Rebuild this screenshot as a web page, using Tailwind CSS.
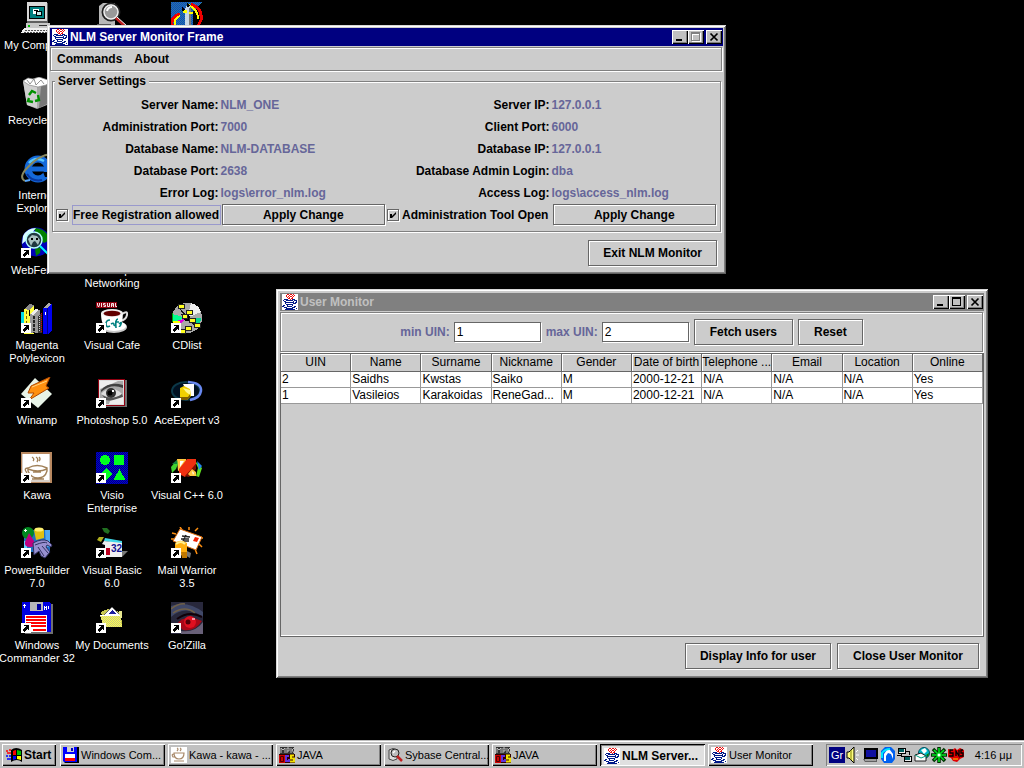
<!DOCTYPE html>
<html lang="en">
<head>
    <meta charset="UTF-8">
    <meta name="viewport" content="width=device-width, initial-scale=1.0">
    <title>NLM Server Monitor</title>
    <script src="https://cdn.jsdelivr.net/npm/@tailwindcss/browser@4"></script>
</head>
<body class="h-screen flex flex-col overflow-hidden bg-black text-black font-['Liberation_Sans',Arial,sans-serif]">

    <!-- shared icons -->
    <svg class="absolute size-0" aria-hidden="true">
        <defs>
            <pattern id="dither" width="2" height="2" patternUnits="userSpaceOnUse"><rect width="2" height="2" fill="#0000d0"/><path d="M0 0h1v1H0zM1 1h1v1H1z" fill="#000080"/></pattern>
            <pattern id="skyDither" width="2" height="2" patternUnits="userSpaceOnUse"><rect width="2" height="2" fill="#1040c0"/><path d="M0 0h1v1H0zM1 1h1v1H1z" fill="#2880a0"/></pattern>
            <pattern id="yellowDither" width="2" height="2" patternUnits="userSpaceOnUse"><rect width="2" height="2" fill="#ffff50"/><path d="M0 0h1v1H0zM1 1h1v1H1z" fill="#c8c880"/></pattern>
        </defs>
        <symbol id="shortcut" viewBox="0 0 10 10">
            <path d="M0 0h10v10H0z" fill="#fff"/>
            <path d="M3 2h5v5H7V6H6v1H5v1H4v1H3V8H2V6h1V5h1V4h1V3H3z" fill="#000"/>
        </symbol>
        <symbol id="java" viewBox="0 0 16 16">
            <g shape-rendering="crispEdges">
                <path d="M0 0h16v16H0z" fill="#fff"/>
                <path d="M5 .5h2M8 .5h2M11 .5h1M4 1.500h1M7 1.500h1M10 1.500h1M12 1.500h1M4 2.500h1M6 2.500h1M8 2.500h2M11 2.500h1M5 3.500h1M7 3.500h1M10 3.500h1M6 4.500h2M9 4.500h2M8 5.500h1" stroke="#f01010"/>
                <path d="M2 5.500h4M10 5.500h3M1 6.500h1M4 6.500h7M12 6.500h3M2 7.500h2M11 7.500h1M14 7.500h1M3 8.500h9M13 8.500h2M3 9.500h1M11 9.500h3M4 10.500h7M1 11.500h2M5 11.500h1M10 11.500h1M0 12.500h2M5 12.500h5M12 12.500h2M2 13.500h3M10 13.500h3M4 14.500h7M14 14.500h1M3 15.500h10" stroke="#001888"/>
            </g>
        </symbol>
        <symbol id="mks" viewBox="0 0 16 16">
            <path d="M1 0h14v7H1z" fill="#333"/><path d="M2 6V1l2 2 2-2v5M8 6V1h2v3H8M12 6V1m3 0l-2 2 2 3" fill="none" stroke="#c0c0c0" stroke-width="1"/>
            <path d="M0 7h16v9H0z" fill="#300000"/><path d="M0 8h6v8H0z" fill="#d00000"/><path d="M1.500 9.500h3v5h-3z" fill="none" stroke="#500000"/>
            <path d="M10 9H7v5h3v-2" fill="none" stroke="#6030e0" stroke-width="2"/>
            <path d="M15 8.500h-3v3h3v3h-4" fill="none" stroke="#f0e000" stroke-width="2"/>
        </symbol>
        <symbol id="floppy" viewBox="0 0 16 16">
            <path d="M1 0h15v16H2l-1-1z" fill="#000"/><path d="M0 0h14v15H1l-1-1z" fill="#0000ff"/>
            <path d="M4 0h7v5H4z" fill="#d0d0d0"/><path d="M8 1h2v3H8z" fill="#0000c0"/>
            <path d="M2 7h10v7H2z" fill="#fff"/><path d="M2 11h10v3H2z" fill="#f00"/>
        </symbol>
    </svg>

    <main class="relative flex-1 min-h-0">
        <div class="grid w-fit grid-cols-[75px_75px_75px] auto-rows-[75px] pt-0.5 text-white text-[11px] leading-[13px] text-center whitespace-nowrap">
            <a href="#" class="flex flex-col items-center gap-[5px] pr-px">
                <svg class="size-8 shrink-0" viewBox="0 0 32 32" shape-rendering="crispEdges">
                    <path d="M6 1h21v20H6z" fill="#606060"/><path d="M6 0h20v19H6z" fill="#d8d8d8"/><path d="M8 4h16v13H8z" fill="#000"/><path d="M9 5h14v11H9z" fill="#008080"/>
                    <path d="M12 7h6v5h-6z" fill="#fff"/><path d="M13 8h4v1h-4z" fill="#000"/><path d="M15 9h6v5h-6z" fill="#000"/><path d="M16 10h4v3h-4z" fill="#c0e8e8"/>
                    <path d="M5 21h24v6H5z" fill="#c8c8c8"/><path d="M7 23h2v2H7z" fill="#00c000"/><path d="M18 23h9v1h-9z" fill="#303030"/>
                    <path d="M3 26h27l-2 5H0z" fill="#f0f0f0"/><path d="M4 28h24M3 30h24" stroke="#505050" stroke-dasharray="2 1"/>
                </svg>
                <span>My Computer</span>
            </a>
            <a href="#" class="flex flex-col items-center gap-[5px] pr-px" aria-label="Find">
                <svg class="size-8 shrink-0" viewBox="0 0 32 32">
                    <path d="M3 4l4-3h12v28l-16-2z" fill="#b8b8b8"/><path d="M1 22h14v2H1z" fill="#555"/><path d="M0 23h12v5H0z" fill="#d8d8d8"/>
                    <circle cx="15" cy="10" r="8.500" fill="#888" stroke="#222" stroke-width="2"/><circle cx="15" cy="10" r="7" fill="#999" stroke="#eee" stroke-width="1.500"/>
                    <path d="M11 9q1-4 5-4" stroke="#fff" stroke-width="2" fill="none"/><path d="M20 16l10 9" stroke="#c02020" stroke-width="3"/><path d="M21 15l10 9" stroke="#fff" stroke-width="1"/>
                </svg>
            </a>
            <a href="#" class="flex flex-col items-center gap-[5px] pr-px" aria-label="Launcher">
                <svg class="size-8 shrink-0" viewBox="0 0 32 32" shape-rendering="crispEdges">
                    <path d="M0 0h32L22 9v18H0z" fill="url(#skyDither)"/><path d="M2 27Q-2 15 9 12M20 2q12 5 10 16l-4 8" stroke="#f00000" stroke-width="3" fill="none"/><path d="M4 26Q2 16 9 14M18 3q9 5 9 14" stroke="#ff0" stroke-width="2" fill="none"/>
                    <path d="M14 7l3-6 3 6v20h-6z" fill="#c8d8e8"/><path d="M18 6h2v21h-2z" fill="#777"/><path d="M12 8h4v3h-4zM18 10h4v2h-4z" fill="#ff0"/><path d="M11 5l3 3-3 1zM16 1l3 3-3 1z" fill="#000"/>
                </svg>
            </a>

            <a href="#" class="col-start-1 flex flex-col items-center gap-[5px] pr-px">
                <svg class="size-8 shrink-0" viewBox="0 0 32 32">
                    <path d="M2 4l14-3 14 3-4 24-10 4-10-4z" fill="#a8a8a8"/><path d="M2 4l4 24 10 3V10z" fill="#d0d0d0"/><path d="M20 9l-2 22 8-4L30 5z" fill="#777"/>
                    <path d="M2 4l5-3 5 1 6-2 6 2 6 2-5 4-8 2-9-2z" fill="#fff" stroke="#888" stroke-width=".7"/><path d="M6 3l3 4 4-5 2 6 5-5 3 4" fill="none" stroke="#777" stroke-width=".8"/>
                    <path d="M8 18l3-4 4 2M17 18l1 5-4 1M12 25l-5-1 1-3" stroke="#009000" stroke-width="2.400" fill="none"/>
                </svg>
                <span>Recycle Bin</span>
            </a>
            <a href="#" class="col-start-1 flex flex-col items-center gap-[5px] pr-px">
                <svg class="size-8 shrink-0" viewBox="0 0 32 32">
                    <circle cx="17" cy="17" r="10" fill="none" stroke="#1468d8" stroke-width="7"/><path d="M9 17h20" stroke="#1468d8" stroke-width="5"/>
                    <path d="M22 20h10v5h-8z" fill="#000"/><path d="M8 11q6-7 15-2" stroke="#58c8ff" stroke-width="2.500" fill="none"/><path d="M6 22q5 8 15 6" stroke="#0838a0" stroke-width="2" fill="none"/>
                    <path d="M4 29q-7-4 3-14Q18 3 30 2" stroke="#888860" stroke-width="2" fill="none"/><path d="M4 29l5-1" stroke="#58a8ff" stroke-width="2"/>
                </svg>
                <span>Internet<br>Explorer</span>
            </a>
            <a href="#" class="col-start-1 flex flex-col items-center gap-[5px] pr-px">
                <svg class="size-8 shrink-0" viewBox="0 0 32 32">
                    <circle cx="15" cy="15" r="14.500" fill="#0000b8"/><path d="M13 1q12 0 16 12l-6 3-7-6zM14 22l6-2-1 6-4 3z" fill="#008000"/><path d="M2 9Q6 1 15 1l-4 5-4 6-6 5z" fill="#d8ffff"/>
                    <circle cx="13" cy="13" r="8" fill="#203840" stroke="#b8ffff" stroke-width="1.500"/><path d="M7 12l4-4 5 1 3 4-2 5-3-4-2 1-2 4z" fill="#a8c0c0"/><path d="M10 12h2M15 12h2" stroke="#000" stroke-width="2"/><path d="M19 19l9 9" stroke="#00ffff" stroke-width="2"/>
                    <use href="#shortcut" y="21" width="10" height="10"/>
                </svg>
                <span>WebFerret</span>
            </a>
            <a href="#" class="flex flex-col items-center gap-[5px] pr-px">
                <svg class="size-8 shrink-0" viewBox="0 0 32 32"><path d="M3 12h26v14H3z" fill="#c0c0c0"/></svg>
                <span>Dial-Up<br>Networking</span>
            </a>

            <a href="#" class="col-start-1 flex flex-col items-center gap-[5px] pr-px">
                <svg class="size-8 shrink-0" viewBox="0 0 32 32" shape-rendering="crispEdges">
                    <path d="M0 10h3v13H0z" fill="#00d8e8"/><path d="M3 7l6-5 4 1v29H3z" fill="#ffff40"/><path d="M3 7l6-5 4 1-5 5z" fill="#888"/><path d="M5 9v20" stroke="#806000" stroke-dasharray="3 2"/><path d="M8.500 8v6" stroke="#000"/>
                    <path d="M9 12l6-5 4 1v23H9z" fill="#999"/><path d="M9 12l6-5 3 1-6 5z" fill="#eee"/><path d="M13 14v17" stroke="#222" stroke-width="2" stroke-dasharray="3 1"/>
                    <path d="M17 14l4-3v20h-4z" fill="#333"/><path d="M18.500 14v16" stroke="#ccc" stroke-dasharray="1 1"/><path d="M20.500 11v19" stroke="#e00000" stroke-dasharray="1 1"/>
                    <path d="M22 6l5-5 4 1v27l-4 3h-5z" fill="#0000f0"/><path d="M22 6l5-5 4 1-5 4z" fill="#aaa"/><path d="M24 10h1v3h-1z" fill="#fff"/><path d="M26.500 6v26" stroke="#000080"/>
                    <use href="#shortcut" y="21" width="10" height="10"/>
                </svg>
                <span>Magenta<br>Polylexicon</span>
            </a>
            <a href="#" class="flex flex-col items-center gap-[5px] pr-px">
                <svg class="size-8 shrink-0" viewBox="0 0 32 32">
                    <path d="M0 0h21v6H0z" fill="#900010"/><path d="M1.500 1v2l1 2 1-2V1M5.500 1v4M9.500 1.500h-2V3h2v1.500h-2M11.500 1v3.500h2V1M15.500 5V1.500h2V5M15.500 3h2M19.500 1v3.500h1.500" stroke="#fff" stroke-width=".9" fill="none"/>
                    <ellipse cx="18" cy="25" rx="13" ry="6" fill="#c8c8c8"/><ellipse cx="18" cy="24" rx="12" ry="5" fill="#fff"/><path d="M26 12q6-4 5 1t-7 6" fill="none" stroke="#ddd" stroke-width="2"/>
                    <path d="M5 11q0 15 9 17h5q8-3 8-17z" fill="#fff"/><ellipse cx="16" cy="11" rx="11" ry="4" fill="#eee"/><ellipse cx="16" cy="11.500" rx="8.500" ry="2.800" fill="#600000"/>
                    <path d="M14 18q-4 0-4 4t4 2M15 22q3-2 3 1l1 1M22 17q-3 0-2 9M19 20h4M23 22q3-3 2 0t-2 2" stroke="#008080" stroke-width="1.600" fill="none"/>
                    <use href="#shortcut" y="21" width="10" height="10"/>
                </svg>
                <span>Visual Cafe</span>
            </a>
            <a href="#" class="flex flex-col items-center gap-[5px] pr-px">
                <svg class="size-8 shrink-0" viewBox="0 0 32 32" shape-rendering="crispEdges">
                    <circle cx="16" cy="16" r="15" fill="#aaa"/><path d="M16 16L20 1q8 2 10 9z" fill="#eee"/><path d="M16 16L1 12v8z" fill="#00ff90"/><path d="M16 16L2 20l3 6z" fill="#e000e0"/><path d="M16 16l14 0-1 7z" fill="#00d890"/><path d="M2 19h7v2H2z" fill="#ff0"/><path d="M20 20l10 2-4 5z" fill="#d000a0"/>
                    <path d="M1 11v9" stroke="#00a000"/><path d="M8 6l18 20M10 12h7" stroke="#111"/><circle cx="16" cy="16" r="3" fill="#000"/>
                    <g fill="#ffff20" stroke="#222" stroke-width="1"><path d="M7 2h6v4H7zM15 8h6v4h-6zM11 12h5v4h-5zM18 16h6v4h-6zM23 21h6v4h-6zM14 24h6v4h-6zM9 27h5v4H9z"/></g>
                    <use href="#shortcut" y="21" width="10" height="10"/>
                </svg>
                <span>CDlist</span>
            </a>

            <a href="#" class="flex flex-col items-center gap-[5px] pr-px">
                <svg class="size-8 shrink-0" viewBox="0 0 32 32">
                    <path d="M14 1l17 16-14 14L0 17z" fill="#e8f4e8"/><path d="M29 0l-4 9 3 2L8 23l5-7H7l3-7z" fill="#ff9010" stroke="#b04800" stroke-width="1"/><path d="M26 4L11 10" stroke="#ffd080"/>
                    <use href="#shortcut" y="21" width="10" height="10"/>
                </svg>
                <span>Winamp</span>
            </a>
            <a href="#" class="flex flex-col items-center gap-[5px] pr-px">
                <svg class="size-8 shrink-0" viewBox="0 0 32 32">
                    <path d="M4 3h27v27H4z" fill="#707070"/><path d="M2 2h27v27H2z" fill="#900010"/><path d="M3 3h25v25H3z" fill="#ddd"/><path d="M4 4h23v23H4z" fill="#a8a8a8"/>
                    <path d="M4 4h18L4 12z" fill="#eee"/><path d="M5 13q8-9 22-5v3q-12-5-22 4z" fill="#404040"/><path d="M5 17q10-11 21 0-9 7-21 0z" fill="#ddd"/><circle cx="15" cy="16" r="5" fill="#303030"/><circle cx="14" cy="16" r="2.500" fill="#000"/><path d="M16 13h2v2h-2z" fill="#fff"/><path d="M6 18q10 6 20-1l1 3q-8 5-17 3z" fill="#555"/><path d="M14 24l13-4v7H13z" fill="#eee"/>
                    <use href="#shortcut" y="21" width="10" height="10"/>
                </svg>
                <span>Photoshop 5.0</span>
            </a>
            <a href="#" class="flex flex-col items-center gap-[5px] pr-px">
                <svg class="size-8 shrink-0" viewBox="0 0 32 32">
                    <ellipse cx="15" cy="14" rx="14" ry="9" fill="#001020" stroke="#0c3848" stroke-width="2"/><path d="M17 5q14 1 13 9-1 7-11 9" fill="none" stroke="#6888f0" stroke-width="2.500"/><path d="M12 7h11v12h-5z" fill="#fff"/><path d="M9 11l4-2 6 3 1 7-4 4H9z" fill="#f0d000"/><path d="M12 11l7 2v5l-4-3z" fill="#fff890"/><path d="M9 20h8l2-3v3l-3 3H9z" fill="#806000"/>
                    <use href="#shortcut" y="21" width="10" height="10"/>
                </svg>
                <span>AceExpert v3</span>
            </a>

            <a href="#" class="flex flex-col items-center gap-[5px] pr-px">
                <svg class="size-8 shrink-0" viewBox="0 0 32 32">
                    <path d="M0 0h31v31H0z" fill="#b88860"/><path d="M1 2h28v28H1z" fill="#d8d0c8"/><path d="M2 2h26v26H2z" fill="#fff"/>
                    <path d="M11 5q3 2 1 4M15 5q3 2 1 5M18 5q2 2 0 4M7 16q9-5 19 0v3q-2 7-9 7t-10-7zM7 17q10 4 19 0M7 16q-5 0-1 5M12 20h8M11 27h12" fill="none" stroke="#a08058" stroke-width="1.400"/>
                    <use href="#shortcut" y="21" width="10" height="10"/>
                </svg>
                <span>Kawa</span>
            </a>
            <a href="#" class="flex flex-col items-center gap-[5px] pr-px">
                <svg class="size-8 shrink-0" viewBox="0 0 32 32" shape-rendering="crispEdges">
                    <path d="M0 0h32v32H0z" fill="url(#dither)"/><g fill="#00ff20"><circle cx="9" cy="8" r="5"/><path d="M18 3h10v10H18zM10 16l6 6-6 6-6-6zM23.500 17l6 11h-12z"/></g>
                    <use href="#shortcut" y="21" width="10" height="10"/>
                </svg>
                <span>Visio<br>Enterprise</span>
            </a>
            <a href="#" class="flex flex-col items-center gap-[5px] pr-px">
                <svg class="size-8 shrink-0" viewBox="0 0 32 32">
                    <path d="M6 7h9v9l-8 3z" fill="#ffc840"/><path d="M6 8l-6 7 1 6 4-4 2-5z" fill="#40d030"/><path d="M9 9h4l-4 6z" fill="#fff"/>
                    <path d="M24 9l7 7-3 9-3-1 2-8z" fill="#60e020"/><path d="M26 9l5 5-3 4z" fill="#2088f0"/><path d="M1 12l5-4v4z" fill="#108040"/>
                    <path d="M16 7h9v5L14 25l-6-3v-5z" fill="#f03010"/><path d="M14 24l11-12v5l-7 8z" fill="#801000"/><path d="M17 22l4-5 4 3v4h-6z" fill="#ffc840"/><path d="M21 19l2 2-1 2z" fill="#fff"/>
                    <use href="#shortcut" y="21" width="10" height="10"/>
                </svg>
                <span>Visual C++ 6.0</span>
            </a>

            <a href="#" class="flex flex-col items-center gap-[5px] pr-px">
                <svg class="size-8 shrink-0" viewBox="0 0 32 32">
                    <path d="M3 3h26v22H3z" fill="#2070c0"/><path d="M24 3h5v17h-4z" fill="#50a8f0"/><path d="M3 14h3v8H3z" fill="#60d0ff"/>
                    <circle cx="7" cy="6" r="6" fill="#008820"/><path d="M4 2h1v1h1v1H5v1H4V4H3V3h1z" fill="#fff"/><path d="M13 3q5-4 10 0v8l-8 2z" fill="#e0c010"/><ellipse cx="18" cy="2.500" rx="4.500" ry="2" fill="#fff070"/>
                    <path d="M8 6l5 8q2 6-4 6t-5-5z" fill="#c00080"/><path d="M12 16q9-5 15-2l4 4-1 2-4-2-1 2 4 5-5 6-4-2-2-5-5 4z" fill="#9890d0" stroke="#303060"/><path d="M14 18q10-4 12-2M17 20l6 9M21 19l6 7" fill="none" stroke="#303060"/>
                    <use href="#shortcut" y="21" width="10" height="10"/>
                </svg>
                <span>PowerBuilder<br>7.0</span>
            </a>
            <a href="#" class="flex flex-col items-center gap-[5px] pr-px">
                <svg class="size-8 shrink-0" viewBox="0 0 32 32">
                    <path d="M6 1h5l3 3-2 3-4-2z" fill="#207020"/><path d="M1 13l2-3 5 0-3 5z" fill="#b0b020"/><path d="M9 11l17 3v3L8 14z" fill="#40d8e8"/>
                    <path d="M6 17l2-3 18 2v14H9V18z" fill="#f0f0f0"/><path d="M26 24l6 0-6 6z" fill="#777"/><path d="M10 21h4v7h-4z" fill="#c00020"/>
                    <text x="15" y="25" font-size="10" font-weight="bold" fill="#101090" font-family="Liberation Sans">32</text>
                    <use href="#shortcut" y="21" width="10" height="10"/>
                </svg>
                <span>Visual Basic<br>6.0</span>
            </a>
            <a href="#" class="flex flex-col items-center gap-[5px] pr-px">
                <svg class="size-8 shrink-0" viewBox="0 0 32 32">
                    <path d="M9 0l2 3M18 0v3M27 1l-3 3M1 6l4 1M0 12h3M28 17l3 3M24 22l2 5M31 11h1" stroke="#ff9010" stroke-width="1.500"/>
                    <path d="M9 2l22 8-6 13L2 14z" fill="#fff" stroke="#e07010"/><path d="M24 10l4 1-2 4-4-1z" fill="#f02000"/><path d="M11 9l8 1M10 12l8 0M13 14h5M15 8l-3 6" stroke="#222" stroke-width="1.400"/>
                    <path d="M12 27l7 4 1-5-4-2z" fill="#777"/><path d="M4 17q4-6 12-1v9l-4 4-8-4z" fill="#ffb010"/><path d="M5 17q5-4 9 0" stroke="#fff090" stroke-width="2" fill="none"/><path d="M10 25h6v6h-5z" fill="#c07800"/>
                    <use href="#shortcut" y="21" width="10" height="10"/>
                </svg>
                <span>Mail Warrior<br>3.5</span>
            </a>

            <a href="#" class="flex flex-col items-center gap-[5px] pr-px">
                <svg class="size-8 shrink-0" viewBox="0 0 32 32" shape-rendering="crispEdges">
                    <path d="M3 2h29v30H4z" fill="#707070"/><path d="M1 0h27l2 2v28H1z" fill="#0000e0"/><path d="M9 0h13v9H9z" fill="#b8b8b8"/><path d="M16 2h4v6h-4z" fill="#0000a0"/>
                    <path d="M2 3.500h3M3.500 2v4M23.500 4v4M25.500 4v4M23 5.500h2M27.500 4v3" stroke="#fff"/><path d="M4 13h22v17H4z" fill="#fff"/><path d="M5 15h20M5 18h20M5 21h20M5 24h20" stroke="#f00" stroke-width="2"/><path d="M12 27h13v2H12z" fill="#f00"/>
                    <use href="#shortcut" y="21" width="10" height="10"/>
                </svg>
                <span>Windows<br>Commander 32</span>
            </a>
            <a href="#" class="flex flex-col items-center gap-[5px] pr-px">
                <svg class="size-8 shrink-0" viewBox="0 0 32 32" shape-rendering="crispEdges">
                    <path d="M5 10l4-2 6-2 10 5 1 13H8z" fill="#c8c850"/><path d="M8 13l8-8 8 8-1 3H9z" fill="#fff" stroke="#666"/><path d="M12 12l4-4 4 4z" fill="#2020a0"/><path d="M23 9h3v7h-3z" fill="#e8e890"/>
                    <path d="M4 13h20l2 12H8z" fill="url(#yellowDither)"/><path d="M4 13.500h20" stroke="#fff"/>
                    <use href="#shortcut" y="21" width="10" height="10"/>
                </svg>
                <span>My Documents</span>
            </a>
            <a href="#" class="flex flex-col items-center gap-[5px] pr-px">
                <svg class="size-8 shrink-0" viewBox="0 0 32 32">
                    <path d="M0 0h32v32H0z" fill="#28283c"/><path d="M0 4q16-6 32 6v5Q14 2 0 15z" fill="#404868"/><path d="M2 11q12-8 22 0M0 7q8-6 14-5" stroke="#706048" stroke-width="1.500" fill="none"/><path d="M6 22q8-11 25-3-7 11-19 9z" fill="#a80818"/><circle cx="19" cy="20" r="6" fill="#e01020"/><circle cx="17" cy="20" r="2.500" fill="#500008"/><path d="M21 16h3v2h-3z" fill="#ff90a0"/><path d="M10 29q14 2 22-9v12H10z" fill="#686078"/><path d="M6 17q12-9 25-2" stroke="#100008" stroke-width="2" fill="none"/>
                    <use href="#shortcut" y="21" width="10" height="10"/>
                </svg>
                <span>Go!Zilla</span>
            </a>
        </div>

        <!-- server monitor window -->
        <section class="absolute left-[47px] top-[25px] w-[679px] bg-[#cccccc] p-[3px] pb-2 shadow-[inset_1px_1px_#d8d8d8,inset_-1px_-1px_#606060,inset_2px_2px_#fff,inset_-2px_-2px_#808080] text-xs font-bold">
            <header class="flex h-[18px] items-center bg-[#000080] pl-0.5 pr-px text-white">
                <svg class="size-4 mr-0.5" viewBox="0 0 16 16"><use href="#java"/></svg>
                <h1 class="flex-1 leading-4">NLM Server Monitor Frame</h1>
                <button type="button" aria-label="Minimize" class="h-3.5 w-4 bg-[#c0c0c0] shadow-[inset_1px_1px_#fff,inset_-1px_-1px_#000,inset_-2px_-2px_#808080]"><svg class="h-3.5 w-4" viewBox="0 0 16 14"><path d="M4 9h6v2H4z"/></svg></button>
                <button type="button" disabled aria-label="Maximize" class="h-3.5 w-4 bg-[#c0c0c0] shadow-[inset_1px_1px_#fff,inset_-1px_-1px_#000,inset_-2px_-2px_#808080]"><svg class="h-3.5 w-4" viewBox="0 0 16 14" shape-rendering="crispEdges"><path d="M4.500 3.500h8v8h-8zM4 4.500h8" fill="none" stroke="#fff"/><path d="M3.500 2.500h8v8h-8zM3 3.500h8" fill="none" stroke="#808080"/></svg></button>
                <button type="button" aria-label="Close" class="ml-0.5 h-3.5 w-4 bg-[#c0c0c0] shadow-[inset_1px_1px_#fff,inset_-1px_-1px_#000,inset_-2px_-2px_#808080]"><svg class="h-3.5 w-4" viewBox="0 0 16 14"><path d="M4.500 3.500l7 7M11.500 3.500l-7 7" stroke="#000" stroke-width="1.700"/></svg></button>
            </header>
            <nav class="mt-px mr-px flex h-6 items-center gap-3 border border-[#808080] px-1.5 shadow-[1px_1px_#fff,inset_1px_1px_#fff]">
                <button type="button">Commands</button>
                <button type="button">About</button>
            </nav>
            <fieldset class="mx-0.5 mt-0.5 border border-[#808080] px-0.5 py-[5px] shadow-[1px_1px_#fff,inset_1px_1px_#fff]">
                <legend class="bg-[#cccccc] px-[3px] leading-4">Server Settings</legend>
                <div class="grid grid-cols-4 auto-rows-[22px] pr-px leading-[22px]">
                    <span class="pr-0.5 text-right">Server Name:</span><span class="text-[#666699]">NLM_ONE</span>
                    <span class="pr-0.5 text-right">Server IP:</span><span class="text-[#666699]">127.0.0.1</span>
                    <span class="pr-0.5 text-right">Administration Port:</span><span class="text-[#666699]">7000</span>
                    <span class="pr-0.5 text-right">Client Port:</span><span class="text-[#666699]">6000</span>
                    <span class="pr-0.5 text-right">Database Name:</span><span class="text-[#666699]">NLM-DATABASE</span>
                    <span class="pr-0.5 text-right">Database IP:</span><span class="text-[#666699]">127.0.0.1</span>
                    <span class="pr-0.5 text-right">Database Port:</span><span class="text-[#666699]">2638</span>
                    <span class="pr-0.5 text-right">Database Admin Login:</span><span class="text-[#666699]">dba</span>
                    <span class="pr-0.5 text-right">Error Log:</span><span class="text-[#666699]">logs\error_nlm.log</span>
                    <span class="pr-0.5 text-right">Access Log:</span><span class="text-[#666699]">logs\access_nlm.log</span>
                    <label class="flex items-center gap-1 pl-px whitespace-nowrap">
                        <span class="relative size-3 shrink-0"><input type="checkbox" checked class="block size-3 appearance-none border border-[#666666] shadow-[1px_1px_#fff,inset_1px_1px_#fff]"><svg class="pointer-events-none absolute inset-0 size-3" viewBox="0 0 12 12"><path d="M3 5h2v2l4-4v2L5 9H3z"/></svg></span>
                        <span class="h-5 min-w-0 flex-1 border border-[#9999cc] leading-[18px]">Free Registration allowed</span>
                    </label>
                    <button type="button" class="mb-px ml-px mr-px border border-[#666666] leading-5 shadow-[1px_1px_#fff,inset_1px_1px_#fff]">Apply Change</button>
                    <label class="flex items-center gap-[3px] pl-px whitespace-nowrap">
                        <span class="relative size-3 shrink-0"><input type="checkbox" checked class="block size-3 appearance-none border border-[#666666] shadow-[1px_1px_#fff,inset_1px_1px_#fff]"><svg class="pointer-events-none absolute inset-0 size-3" viewBox="0 0 12 12"><path d="M3 5h2v2l4-4v2L5 9H3z"/></svg></span>
                        <span>Administration Tool Open</span>
                    </label>
                    <button type="button" class="mb-px ml-px mr-px border border-[#666666] leading-5 shadow-[1px_1px_#fff,inset_1px_1px_#fff]">Apply Change</button>
                </div>
            </fieldset>
            <div class="mt-2 flex justify-end pr-1.5">
                <button type="button" class="border border-[#666666] px-3.5 leading-6 shadow-[1px_1px_#fff,inset_1px_1px_#fff]">Exit NLM Monitor</button>
            </div>
        </section>

        <!-- user monitor window -->
        <section class="absolute left-[276px] top-[289px] flex h-[389px] w-[712px] flex-col bg-[#cccccc] p-1 shadow-[inset_1px_1px_#d8d8d8,inset_-1px_-1px_#606060,inset_2px_2px_#fff,inset_-2px_-2px_#808080] text-xs">
            <header class="flex h-[18px] items-center bg-[#808080] pl-0.5 pr-px font-bold text-[#c0c0c0]">
                <svg class="size-4 mr-0.5" viewBox="0 0 16 16"><use href="#java"/></svg>
                <h2 class="flex-1 leading-4">User Monitor</h2>
                <button type="button" aria-label="Minimize" class="h-3.5 w-4 bg-[#c0c0c0] text-black shadow-[inset_1px_1px_#fff,inset_-1px_-1px_#000,inset_-2px_-2px_#808080]"><svg class="h-3.5 w-4" viewBox="0 0 16 14"><path d="M4 9h6v2H4z"/></svg></button>
                <button type="button" aria-label="Maximize" class="h-3.5 w-4 bg-[#c0c0c0] shadow-[inset_1px_1px_#fff,inset_-1px_-1px_#000,inset_-2px_-2px_#808080]"><svg class="h-3.5 w-4" viewBox="0 0 16 14" shape-rendering="crispEdges"><path d="M3.500 2.500h8v8h-8zM3 3.500h8" fill="none" stroke="#000"/></svg></button>
                <button type="button" aria-label="Close" class="ml-0.5 h-3.5 w-4 bg-[#c0c0c0] shadow-[inset_1px_1px_#fff,inset_-1px_-1px_#000,inset_-2px_-2px_#808080]"><svg class="h-3.5 w-4" viewBox="0 0 16 14"><path d="M4.500 3.500l7 7M11.500 3.500l-7 7" stroke="#000" stroke-width="1.700"/></svg></button>
            </header>
            <form class="mt-px mr-px flex h-10 items-center justify-center gap-1 border border-[#808080] font-bold shadow-[1px_1px_#fff,inset_1px_1px_#fff]">
                <label for="minUin" class="text-[#666699]">min UIN:</label>
                <input type="text" id="minUin" value="1" class="mr-px h-5 w-[87px] border border-[#666666] bg-white px-0.5 font-normal shadow-[1px_1px_#fff] outline-none">
                <label for="maxUin" class="text-[#666699]">max UIN:</label>
                <input type="text" id="maxUin" value="2" class="mr-px h-5 w-[87px] border border-[#666666] bg-white px-0.5 font-normal shadow-[1px_1px_#fff] outline-none">
                <button type="button" class="mr-px border border-[#666666] px-[15px] leading-6 shadow-[1px_1px_#fff,inset_1px_1px_#fff]">Fetch users</button>
                <button type="button" class="border border-[#666666] px-[15px] leading-6 shadow-[1px_1px_#fff,inset_1px_1px_#fff]">Reset</button>
            </form>
            <div class="mt-px min-h-0 flex-1 border border-[#666666] shadow-[inset_-1px_-1px_#fff]">
                <table class="w-full table-fixed border-separate border-spacing-0 bg-white text-left">
                    <thead>
                        <tr class="text-center leading-[17px] *:overflow-hidden *:border-r *:border-b *:border-[#666666] *:bg-[#cccccc] *:p-0 *:font-normal *:whitespace-nowrap *:shadow-[inset_1px_1px_#fff]">
                            <th>UIN</th><th>Name</th><th>Surname</th><th>Nickname</th><th>Gender</th><th>Date of birth</th><th>Telephone ...</th><th>Email</th><th>Location</th><th>Online</th>
                        </tr>
                    </thead>
                    <tbody>
                        <tr class="leading-[15px] *:overflow-hidden *:border-r *:border-b *:border-[#999999] *:py-0 *:pl-px *:pr-0 *:whitespace-nowrap">
                            <td>2</td><td>Saidhs</td><td>Kwstas</td><td>Saiko</td><td>M</td><td>2000-12-21</td><td>N/A</td><td>N/A</td><td>N/A</td><td>Yes</td>
                        </tr>
                        <tr class="leading-[15px] *:overflow-hidden *:border-r *:border-b *:border-[#999999] *:py-0 *:pl-px *:pr-0 *:whitespace-nowrap">
                            <td>1</td><td>Vasileios</td><td>Karakoidas</td><td>ReneGad...</td><td>M</td><td>2000-12-21</td><td>N/A</td><td>N/A</td><td>N/A</td><td>Yes</td>
                        </tr>
                    </tbody>
                </table>
            </div>
            <div class="flex justify-end gap-1.5 pt-1.5 pr-[5px] pb-[5px] font-bold">
                <button type="button" class="border border-[#666666] px-3.5 leading-6 shadow-[1px_1px_#fff,inset_1px_1px_#fff]">Display Info for user</button>
                <button type="button" class="border border-[#666666] px-[15px] leading-6 shadow-[1px_1px_#fff,inset_1px_1px_#fff]">Close User Monitor</button>
            </div>
        </section>
    </main>

    <footer class="flex h-7 shrink-0 gap-[3px] bg-[#c0c0c0] px-0.5 pt-1 pb-0.5 text-[11px] leading-[22px] whitespace-nowrap shadow-[inset_0_1px_#c0c0c0,inset_0_2px_#fff]">
        <button type="button" class="mr-px flex w-[54px] items-center gap-0.5 bg-[#c0c0c0] pl-1 text-xs font-bold shadow-[inset_1px_1px_#fff,inset_-1px_-1px_#000,inset_-2px_-2px_#808080]">
            <svg class="h-4 w-4 shrink-0" viewBox="0 0 16 16"><path d="M5 3q5-4 11 0v12q-5-4-11 0z" fill="#000"/><path d="M7 4q2-1 3-1v5H7z" fill="#f00"/><path d="M11 3l4 1v4h-4z" fill="#00c000"/><path d="M7 9h3v3l-3 1z" fill="#00f"/><path d="M11 9h4v4l-4-1z" fill="#ff0"/><path d="M0 4h2M3 3h2M1 6h4" stroke="#f00" stroke-width="1.400"/><path d="M0 9h2M3 9h2M1 12h4" stroke="#00f" stroke-width="1.400"/></svg>
            Start
        </button>
        <button type="button" class="flex w-[105px] items-center gap-0.5 pl-[3px] shadow-[inset_1px_1px_#fff,inset_-1px_-1px_#000,inset_-2px_-2px_#808080]"><svg class="size-4 shrink-0" viewBox="0 0 16 16"><use href="#floppy"/></svg>Windows Com...</button>
        <button type="button" class="flex w-[105px] items-center gap-0.5 pl-[3px] shadow-[inset_1px_1px_#fff,inset_-1px_-1px_#000,inset_-2px_-2px_#808080]"><svg class="size-4 shrink-0" viewBox="0 0 16 16"><path d="M0 0h16v16H0z" fill="#fff"/><path d="M6 1q2 1 0 3M9 1q2 1 0 3M3 6h10q0 6-5 6T3 6zM3 7Q0 7 2 10l2 0M3 14h10" fill="none" stroke="#a88868" stroke-width="1.200"/></svg>Kawa - kawa - ...</button>
        <button type="button" class="flex w-[105px] items-center gap-0.5 pl-[3px] shadow-[inset_1px_1px_#fff,inset_-1px_-1px_#000,inset_-2px_-2px_#808080]"><svg class="size-4 shrink-0" viewBox="0 0 16 16"><use href="#mks"/></svg>JAVA</button>
        <button type="button" class="flex w-[105px] items-center gap-0.5 pl-[3px] shadow-[inset_1px_1px_#fff,inset_-1px_-1px_#000,inset_-2px_-2px_#808080]"><svg class="size-4 shrink-0" viewBox="0 0 16 16"><path d="M2 3q4-3 8 0v9q-4 3-8 0z" fill="#ddd" stroke="#444"/><circle cx="8" cy="6" r="4" fill="#bbb" stroke="#222"/><path d="M6 6l2-2" stroke="#fff" stroke-width="1.500"/><path d="M10 9l5 5" stroke="#c02020" stroke-width="2.500"/></svg>Sybase Central...</button>
        <button type="button" class="flex w-[105px] items-center gap-0.5 pl-[3px] shadow-[inset_1px_1px_#fff,inset_-1px_-1px_#000,inset_-2px_-2px_#808080]"><svg class="size-4 shrink-0" viewBox="0 0 16 16"><use href="#mks"/></svg>JAVA</button>
        <button type="button" class="flex w-[105px] items-center gap-0.5 bg-[#e0e0e0] pt-px pl-1 text-xs font-bold shadow-[inset_1px_1px_#000,inset_-1px_-1px_#fff,inset_2px_2px_#808080]"><svg class="size-4 shrink-0" viewBox="0 0 16 16"><use href="#java"/></svg>NLM Server...</button>
        <button type="button" class="flex w-[105px] items-center gap-0.5 pl-[3px] shadow-[inset_1px_1px_#fff,inset_-1px_-1px_#000,inset_-2px_-2px_#808080]"><svg class="size-4 shrink-0" viewBox="0 0 16 16"><use href="#java"/></svg>User Monitor</button>
        <div class="ml-auto flex w-[196px] items-center gap-px px-[3px] shadow-[inset_1px_1px_#808080,inset_-1px_-1px_#fff]">
            <span class="w-4 bg-[#000080] text-center leading-4 text-white">Gr</span>
            <svg class="size-4 shrink-0" viewBox="0 0 16 16"><path d="M1 5h2l5-5v16l-5-5H1z" fill="#ffff80" stroke="#000"/><path d="M5 3v10" stroke="#808000"/><path d="M10 5l2-2M10 8h3M10 11l2 2" stroke="#fff"/></svg>
            <svg class="size-4 shrink-0" viewBox="0 0 16 16"><path d="M1 1h14v11H1z" fill="#000"/><path d="M3 3h10v7H3z" fill="#1010a0"/><path d="M0 12h14v3H2z" fill="#606060"/><path d="M2 13h11" stroke="#ddd"/></svg>
            <svg class="size-4 shrink-0" viewBox="0 0 16 16"><path d="M1 4l4-4h6l4 4v8l-3 4H4l-3-4z" fill="#0060f0"/><path d="M4 14V7l3-4h3l3 4v5l-2-5-3-1-2 3v5z" fill="#fff"/><path d="M2 11V6q3-4 8-4" stroke="#00e8ff" stroke-width="2" fill="none"/></svg>
            <svg class="size-4 shrink-0" viewBox="0 0 16 16" shape-rendering="crispEdges"><path d="M1 1h7v5H1zM7 9h7v5H7z" fill="#eee" stroke="#000"/><path d="M2 2h5v3H2zM8 10h5v3H8z" fill="#006060"/><path d="M4 6v3h3M9 4h3v4M0 8h5" stroke="#000" fill="none"/></svg>
            <svg class="size-4 shrink-0" viewBox="0 0 16 16"><circle cx="10" cy="6" r="5.500" fill="#00b8c8" stroke="#005060"/><path d="M7 3l4-2 2 3-3 3z" fill="#fff"/><path d="M12 8l3-2-1 4z" fill="#008000"/><path d="M1 8l6-2 5 3v5H1z" fill="#fff" stroke="#222"/><path d="M1 8l6 3 5-2" fill="none" stroke="#00a080"/></svg>
            <svg class="size-4 shrink-0" viewBox="0 0 16 16"><path d="M8 0v16M0 8h16M2 2l12 12M14 2L2 14" stroke="#003000" stroke-width="3.500"/><path d="M8 1v14M1 8h14M3 3l10 10M13 3L3 13" stroke="#00e020" stroke-width="1.600"/><circle cx="8" cy="8" r="1.500" fill="#fff"/></svg>
            <svg class="size-4 shrink-0" viewBox="0 0 16 16"><path d="M0 2l4 1 3-2 2 2 3-2 4 2v7l-4 2-3 3-4-1-2-3-3-1z" fill="#e00000"/><path d="M5 3H2v3h3v3H1M8 9V4l3 5V3M15 3h-2v3h2v3h-3" stroke="#000" stroke-width="1.300" fill="none"/><path d="M5 12h5" stroke="#ffd000"/></svg>
            <time class="flex-1 pr-[7px] text-right">4:16 μμ</time>
        </div>
    </footer>
</body>
</html>
